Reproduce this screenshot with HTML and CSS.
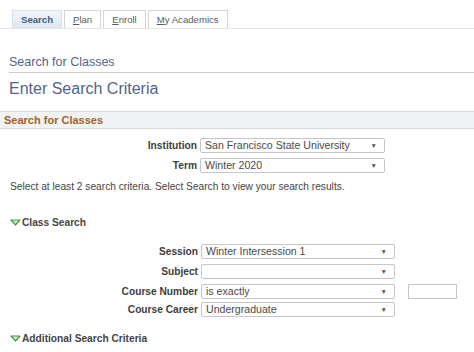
FILE: index.html
```html
<!DOCTYPE html>
<html lang="en">
<head>
  <meta charset="UTF-8">
  <title>Search for Classes</title>
  <link rel="stylesheet" href="styles.css">
</head>
<body>
  <div class="tabs">
    <div class="tab active">Search</div>
    <div class="tab"><u>P</u>lan</div>
    <div class="tab"><u>E</u>nroll</div>
    <div class="tab"><u>M</u>y Academics</div>
  </div>

  <div class="page-title">Search for Classes</div>
  <h1>Enter Search Criteria</h1>

  <div class="band">Search for Classes</div>

  <div class="form top-form">
    <div class="row">
      <label>Institution</label>
      <div class="select">San Francisco State University<span class="arrow">&#9660;</span></div>
    </div>
    <div class="row">
      <label>Term</label>
      <div class="select">Winter 2020<span class="arrow">&#9660;</span></div>
    </div>
  </div>

  <p class="hint">Select at least 2 search criteria. Select Search to view your search results.</p>

  <div class="section">
    <svg class="tri" width="11" height="7" viewBox="0 0 11 7"><path d="M1 1 L10 1 L5.5 6 Z" fill="#cfe6c8" stroke="#4f9a4a" stroke-width="1.2" stroke-linejoin="round"/></svg>
    Class Search
  </div>

  <div class="form class-form">
    <div class="row">
      <label>Session</label>
      <div class="select">Winter Intersession 1<span class="arrow">&#9660;</span></div>
    </div>
    <div class="row">
      <label>Subject</label>
      <div class="select"><span class="arrow">&#9660;</span></div>
    </div>
    <div class="row">
      <label>Course Number</label>
      <div class="select">is exactly<span class="arrow">&#9660;</span></div>
      <div class="text-input"></div>
    </div>
    <div class="row tight">
      <label>Course Career</label>
      <div class="select">Undergraduate<span class="arrow">&#9660;</span></div>
    </div>
  </div>

  <div class="section extra">
    <svg class="tri" width="11" height="7" viewBox="0 0 11 7"><path d="M1 1 L10 1 L5.5 6 Z" fill="#cfe6c8" stroke="#4f9a4a" stroke-width="1.2" stroke-linejoin="round"/></svg>
    Additional Search Criteria
  </div>
</body>
</html>
```

FILE: styles.css
```css
* {
  margin: 0;
  padding: 0;
  box-sizing: border-box;
}

body {
  font-family: "Liberation Sans", Arial, sans-serif;
  background: #ffffff;
  color: #333333;
  font-size: 10px;
  width: 474px;
  height: 352px;
  overflow: hidden;
}

/* tabs */
.tabs {
  display: flex;
  gap: 2px;
  padding: 10px 0 0 12px;
  border-bottom: 1px solid #e3e7eb;
}

.tab {
  height: 18px;
  padding: 0 8px;
  line-height: 17px;
  border: 1px solid #d3d6d9;
  border-bottom: none;
  background: #ffffff;
  color: #5a5a5a;
  font-size: 9.6px;
}

.tab.active {
  background: linear-gradient(#f2f6fa, #dde7f2);
  border-color: #d9e0e8;
  color: #415b80;
  font-weight: bold;
}

/* page titles */
.page-title {
  margin: 26px 0 0 9px;
  padding-bottom: 3px;
  border-bottom: 1px solid #c9ced3;
  font-size: 12.5px;
  color: #52648a;
}

h1 {
  margin: 7px 0 0 9px;
  font-size: 16px;
  font-weight: normal;
  color: #52648a;
}

.band {
  margin-top: 13px;
  height: 18px;
  padding-left: 4px;
  line-height: 16px;
  background: #f0f3f3;
  border-top: 1px solid #d6dadb;
  border-bottom: 1px solid #d6dadb;
  color: #a3612a;
  font-size: 11px;
  font-weight: bold;
}

/* form rows */
.form {
  display: flex;
  flex-direction: column;
}

.row {
  display: flex;
  align-items: center;
}

.row label {
  text-align: right;
  font-weight: bold;
  font-size: 10.2px;
  color: #3d3d3d;
  padding-right: 3px;
}

.select {
  position: relative;
  height: 15px;
  border: 1px solid #c6c6c6;
  border-radius: 2px;
  padding-left: 4px;
  line-height: 13px;
  font-size: 10.6px;
  color: #4a4a4a;
  white-space: nowrap;
}

.arrow {
  position: absolute;
  right: 7px;
  top: 0;
  font-size: 6.5px;
  color: #555555;
}

.top-form {
  margin-top: 9px;
  gap: 5px;
}

.top-form label {
  width: 200px;
}

.top-form .select {
  width: 185px;
}

.class-form {
  margin-top: 16px;
  gap: 5px;
}

.class-form label {
  width: 201px;
}

.class-form .select {
  width: 194px;
}

.class-form .row.tight {
  margin-top: -2px;
}

.text-input {
  width: 49px;
  height: 15px;
  margin-left: 13px;
  border: 1px solid #c6c6c6;
}

.hint {
  margin: 8px 0 0 10px;
  font-size: 10.2px;
  color: #454545;
}

/* collapsible sections */
.section {
  display: flex;
  align-items: center;
  margin: 25px 0 0 10px;
  font-size: 10.2px;
  font-weight: bold;
  color: #444444;
}

.tri {
  margin-right: 1px;
}

.section.extra {
  margin-top: 16px;
}
```
